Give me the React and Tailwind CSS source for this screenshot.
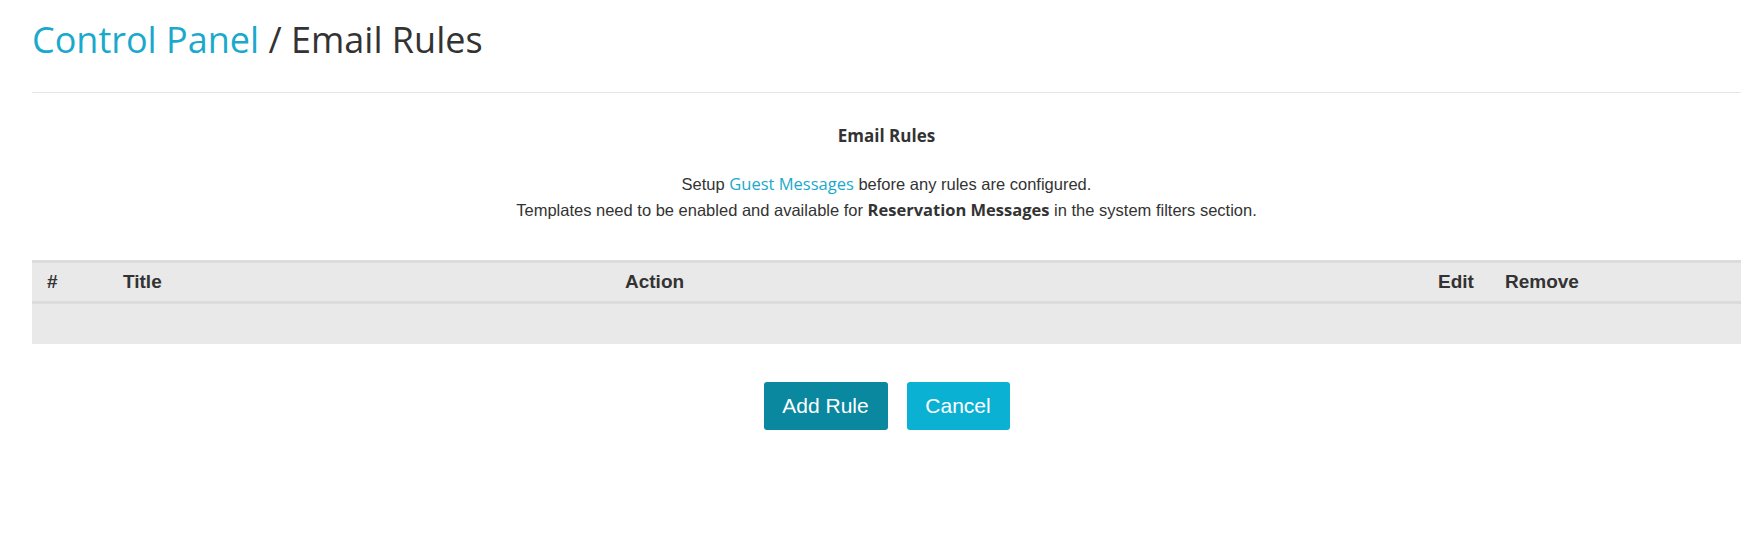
import React from "react";

const columns = [
  { label: "#", className: "w-[76px] pl-[15px]" },
  { label: "Title", className: "w-[502px] pl-[15px]" },
  { label: "Action", className: "flex-1 pl-[15px]" },
  { label: "Edit", className: "w-[67px] pl-0" },
  { label: "Remove", className: "w-[236px] pl-0" },
];

function RulesTable() {
  return (
    <div className="mt-[37px] bg-[#e9e9e9] font-['Liberation_Sans',Arial,sans-serif] text-[#333]">
      {/* header */}
      <div className="flex h-[44px] items-center border-y-[3px] border-[#dcdcdc] text-[19px] font-bold">
        {columns.map((col) => (
          <div key={col.label} className={col.className}>
            {col.label}
          </div>
        ))}
      </div>
      {/* empty body row */}
      <div className="h-[40px]" />
    </div>
  );
}

export default function App() {
  return (
    <div className="min-h-[533px] bg-white pl-[32px] pr-[12px] pt-[20px]">
      {/* page title */}
      <h1 className="font-['Open_Sans',sans-serif] text-[36px] leading-[40px] text-[#333]">
        <a href="#" className="text-[#1aa9cc]">
          Control Panel
        </a>{" "}
        / Email Rules
      </h1>
      <div className="mt-[32px] border-t border-[#e6e6e6]" />

      <div className="text-center">
        <h4 className="mt-[32px] font-['Open_Sans',sans-serif] text-[17px] font-bold leading-[22px] text-[#333]">
          Email Rules
        </h4>
        <div className="mt-[24px] font-['Liberation_Sans',Arial,sans-serif] text-[16.5px] leading-[26px] text-[#333]">
          <p>
            Setup{" "}
            <a href="#" className="font-['Open_Sans',sans-serif] text-[#1aa9cc]">
              Guest Messages
            </a>{" "}
            before any rules are configured.
          </p>
          <p>
            Templates need to be enabled and available for{" "}
            <b className="font-['Open_Sans',sans-serif] font-bold">Reservation Messages</b> in the system filters
            section.
          </p>
        </div>
      </div>

      <RulesTable />

      <div className="mt-[38px] flex justify-center gap-[19px] font-['Liberation_Sans',Arial,sans-serif] text-[21px] text-white">
        <button className="h-[48px] w-[124px] rounded-[3px] bg-[#0a889f]">Add Rule</button>
        <button className="h-[48px] w-[103px] rounded-[3px] bg-[#0bb1d3]">Cancel</button>
      </div>
    </div>
  );
}
